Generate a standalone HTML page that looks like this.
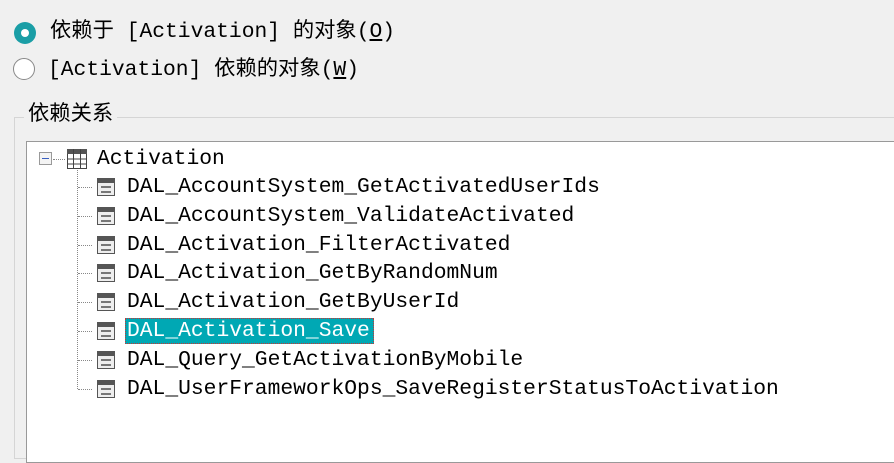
<!DOCTYPE html><html><head><style>
body{margin:0;width:894px;height:444px;background:#f0f0f0;position:relative;overflow:hidden;font-family:"Liberation Mono","Noto Sans CJK SC",monospace;color:#000}
.t{position:absolute;font-size:21.3px;line-height:24px;white-space:pre}
.cj{font-family:"Liberation Mono","Noto Sans CJK SC",monospace}
.ic{position:absolute;width:18px;height:18px;border:1px solid #555;background:#eee;box-sizing:border-box}
.ic:before{content:"";position:absolute;left:0;right:0;top:0;height:4px;background:#555}
.ic:after{content:"";position:absolute;left:3px;top:7px;width:10px;height:7px;border-top:2px solid #777;border-bottom:2px solid #777;box-sizing:border-box}
.dh{position:absolute;height:0;border-top:1px dotted #888;width:14px;left:80px}
</style></head><body>
<div style="position:absolute;left:14px;top:22px;width:22px;height:22px;border-radius:50%;background:#1a9ea6"></div>
<div style="position:absolute;left:21px;top:29px;width:8px;height:8px;border-radius:50%;background:#fff"></div>
<div class="t" style="left:50px;top:20px">依赖于 [Activation] 的对象(<u>O</u>)</div>
<div style="position:absolute;left:13px;top:58px;width:22px;height:22px;border-radius:50%;border:1px solid #888;background:#fff;box-sizing:border-box"></div>
<div class="t" style="left:48px;top:58px">[Activation] 依赖的对象(<u>W</u>)</div>
<div style="position:absolute;left:14px;top:117px;width:900px;height:340px;border:1px solid #d5d5d5"></div>
<div class="t" style="left:24px;top:103px;background:#f0f0f0;padding:0 4px">依赖关系</div>
<div style="position:absolute;left:26px;top:141px;width:900px;height:320px;background:#fff;border:1px solid #999"></div>
<div style="position:absolute;left:39px;top:152px;width:13px;height:13px;border:1px solid #999;background:#f4f4f4;box-sizing:border-box"></div>
<div style="position:absolute;left:42px;top:158px;width:7px;height:1px;background:#3a5fc0"></div>
<div style="position:absolute;left:53px;top:159px;width:12px;border-top:1px dotted #888"></div>
<svg style="position:absolute;left:67px;top:149px" width="20" height="20"><rect x="0.5" y="0.5" width="19" height="19" fill="#fff" stroke="#444"/><rect x="0" y="0" width="20" height="5" fill="#555"/><path d="M0 10H20M0 15H20M6.5 0V20M13.5 0V20" stroke="#444"/></svg>
<div class="t" style="left:97px;top:147px">Activation</div>
<div style="position:absolute;left:77px;top:170px;height:219px;border-left:1px dotted #888"></div>
<div class="dh" style="top:187px;left:78px"></div><div class="ic" style="left:97px;top:178px"></div><div class="t" style="left:127px;top:175px">DAL_AccountSystem_GetActivatedUserIds</div>
<div class="dh" style="top:216px;left:78px"></div><div class="ic" style="left:97px;top:207px"></div><div class="t" style="left:127px;top:204px">DAL_AccountSystem_ValidateActivated</div>
<div class="dh" style="top:245px;left:78px"></div><div class="ic" style="left:97px;top:236px"></div><div class="t" style="left:127px;top:233px">DAL_Activation_FilterActivated</div>
<div class="dh" style="top:273px;left:78px"></div><div class="ic" style="left:97px;top:264px"></div><div class="t" style="left:127px;top:261px">DAL_Activation_GetByRandomNum</div>
<div class="dh" style="top:302px;left:78px"></div><div class="ic" style="left:97px;top:293px"></div><div class="t" style="left:127px;top:290px">DAL_Activation_GetByUserId</div>
<div class="dh" style="top:331px;left:78px"></div><div class="ic" style="left:97px;top:322px"></div>
<div style="position:absolute;left:125px;top:318px;width:249px;height:26px;background:#00a8b4;border:1px dotted #c33;box-sizing:border-box"></div>
<div class="t" style="left:127px;top:319px;color:#fff">DAL_Activation_Save</div>
<div class="dh" style="top:360px;left:78px"></div><div class="ic" style="left:97px;top:351px"></div><div class="t" style="left:127px;top:348px">DAL_Query_GetActivationByMobile</div>
<div class="dh" style="top:389px;left:78px"></div><div class="ic" style="left:97px;top:380px"></div><div class="t" style="left:127px;top:377px">DAL_UserFrameworkOps_SaveRegisterStatusToActivation</div>
</body></html>
